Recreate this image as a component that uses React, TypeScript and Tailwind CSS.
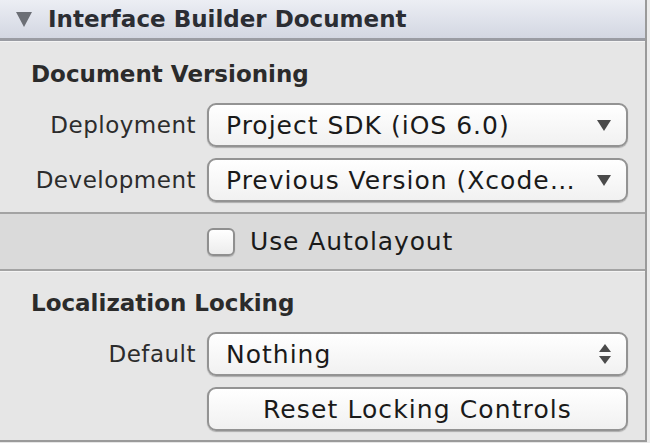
import React from "react";

const Down = () => (
  <svg width="14" height="11" viewBox="0 0 14 11" className="shrink-0">
    <polygon points="0,0 14,0 7,11" fill="#4a4a4a" />
  </svg>
);

const UpDown = () => (
  <svg width="12" height="20" viewBox="0 0 12 20" className="shrink-0">
    <polygon points="6,0 12,8 0,8" fill="#4a4a4a" />
    <polygon points="0,12 12,12 6,20" fill="#4a4a4a" />
  </svg>
);

function Popup({ text, icon }: { text: string; icon: React.ReactNode }) {
  return (
    <div className="w-[421px] h-[44px] rounded-[9px] border-2 border-[#939393] bg-gradient-to-b from-[#ffffff] to-[#f1f1f1] shadow-[0_1px_1px_rgba(0,0,0,0.25)] flex items-center pl-[17px] pr-[15px]">
      <span className="flex-1 text-[25px] tracking-[1px] text-[#1a1a1a] leading-none whitespace-nowrap">{text}</span>
      {icon}
    </div>
  );
}

function Row({ label, children }: { label: string; children: React.ReactNode }) {
  return (
    <div className="flex items-center">
      <div className="w-[196px] text-right text-[23px] tracking-[0.5px] text-[#2c2c2c] leading-none whitespace-nowrap">{label}</div>
      <div className="ml-[11px]">{children}</div>
    </div>
  );
}

export default function App() {
  return (
    <div
      className="w-[650px] h-[443px] bg-[#e6e6e6] flex overflow-hidden"
      style={{ fontFamily: '"DejaVu Sans", "Liberation Sans", sans-serif' }}
    >
      <div className="w-[647px] flex flex-col border-r-2 border-[#9a9a9a] h-[442px] border-b-2">
        <div className="h-[41px] bg-gradient-to-b from-[#eceef4] to-[#d3d7e2] border-b-[3px] border-[#9a9ca3] flex items-center pl-[16px] shrink-0">
          <svg width="16" height="15" viewBox="0 0 16 15">
            <polygon points="0,0 16,0 8,15" fill="#6c6f76" />
          </svg>
          <span className="ml-[16px] text-[23px] font-bold text-[#2b2d33] leading-none whitespace-nowrap">Interface Builder Document</span>
        </div>
        <div className="flex flex-col pt-[20px] pb-[10px] border-b-2 border-[#a3a3a3] border-t border-t-[#f4f4f4]">
          <div className="pl-[31px] text-[23px] font-bold text-[#2b2b2b] leading-[24px]">Document Versioning</div>
          <div className="mt-[17px] flex flex-col gap-[11px]">
            <Row label="Deployment">
              <Popup text="Project SDK (iOS 6.0)" icon={<Down />} />
            </Row>
            <Row label="Development">
              <Popup text="Previous Version (Xcode…" icon={<Down />} />
            </Row>
          </div>
        </div>
        <div className="h-[57px] bg-[#dadada] border-b-2 border-[#a3a3a3] flex items-center pl-[207px] shrink-0">
          <div className="w-[28px] h-[28px] rounded-[6px] border-2 border-[#8f8f8f] bg-gradient-to-b from-[#ffffff] to-[#ececec] shadow-[0_1px_1px_rgba(0,0,0,0.2)]" />
          <span className="ml-[15px] text-[25px] tracking-[0.9px] text-[#1a1a1a] leading-none whitespace-nowrap">Use Autolayout</span>
        </div>
        <div className="flex flex-col pt-[19px] border-t border-t-[#f4f4f4]">
          <div className="pl-[31px] text-[23px] font-bold text-[#2b2b2b] leading-[24px]">Localization Locking</div>
          <div className="mt-[17px] flex flex-col gap-[11px]">
            <Row label="Default">
              <Popup text="Nothing" icon={<UpDown />} />
            </Row>
            <div className="ml-[207px] w-[421px] h-[44px] rounded-[9px] border-2 border-[#939393] bg-gradient-to-b from-[#ffffff] to-[#f1f1f1] shadow-[0_1px_1px_rgba(0,0,0,0.25)] flex items-center justify-center">
              <span className="text-[25px] tracking-[1.1px] text-[#1a1a1a] leading-none whitespace-nowrap">Reset Locking Controls</span>
            </div>
          </div>
        </div>
      </div>
      <div className="flex-1 bg-[#ececec]" />
    </div>
  );
}
